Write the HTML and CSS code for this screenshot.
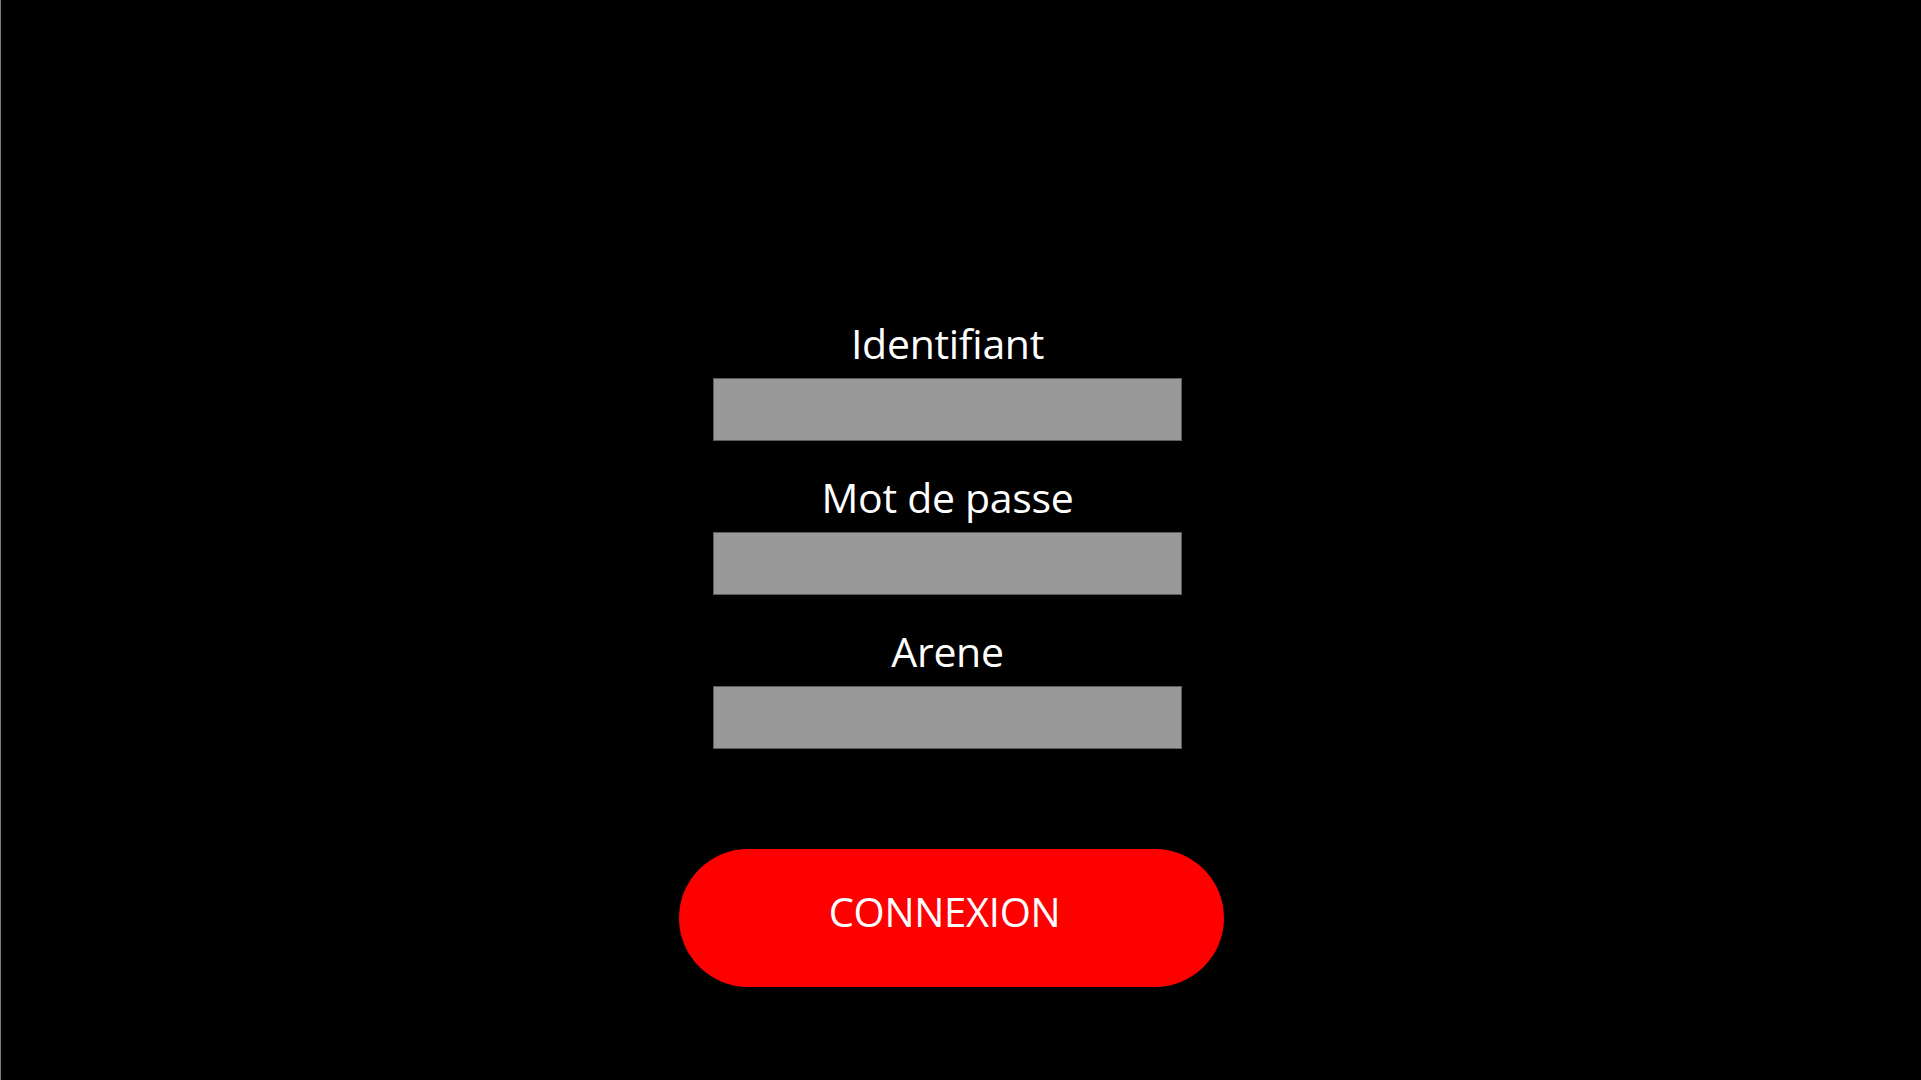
FILE: index.html
```html
<!DOCTYPE html>
<html lang="fr">
<head>
<meta charset="utf-8">
<title>Connexion</title>
<link rel="stylesheet" href="styles.css">
</head>
<body>
<main class="page">
  <form class="login" onsubmit="return false;">
    <div class="field">
      <label class="field-label" for="id">Identifiant</label>
      <input class="field-input" id="id" type="text">
    </div>
    <div class="field">
      <label class="field-label" for="pw">Mot de passe</label>
      <input class="field-input" id="pw" type="password">
    </div>
    <div class="field">
      <label class="field-label" for="arene">Arene</label>
      <input class="field-input" id="arene" type="text">
    </div>
    <button class="connect" type="submit">CONNEXION</button>
  </form>
</main>
</body>
</html>
```

FILE: styles.css
```css
html, body {
  margin: 0;
  padding: 0;
  background: #000;
  height: 100%;
  overflow: hidden;
}

body {
  border-left: 1px solid #7a7a7a;
  box-sizing: border-box;
  font-family: "Open Sans", "Noto Sans", sans-serif;
  color: #fff;
}

.page {
  display: flex;
  padding: 322px 0 0 678px;
}

.login {
  display: flex;
  flex-direction: column;
  align-items: flex-start;
  gap: 35px;
}

.field {
  display: flex;
  flex-direction: column;
  gap: 14px;
  margin-left: 34px;
  width: 469px;
}

.field-label {
  display: block;
  text-align: center;
  font-size: 41px;
  line-height: 42px;
  height: 42px;
  letter-spacing: -0.3px;
  color: #fff;
}

.field-input {
  display: block;
  box-sizing: border-box;
  width: 469px;
  height: 63px;
  margin: 0;
  background: #999999;
  border: 1px solid #5c5c5c;
  outline: none;
  padding: 0 12px;
  font: inherit;
  font-size: 24px;
  color: #000;
}

.connect {
  margin-top: 65px;
  width: 545px;
  height: 138px;
  border: none;
  border-radius: 69px;
  background: #ff0000;
  color: #fff;
  font-family: "Open Sans", "Noto Sans", sans-serif;
  font-size: 40px;
  line-height: 40px;
  letter-spacing: -0.3px;
  display: flex;
  align-items: center;
  justify-content: center;
  padding: 0 14px 12px 0;
  cursor: pointer;
}
```
